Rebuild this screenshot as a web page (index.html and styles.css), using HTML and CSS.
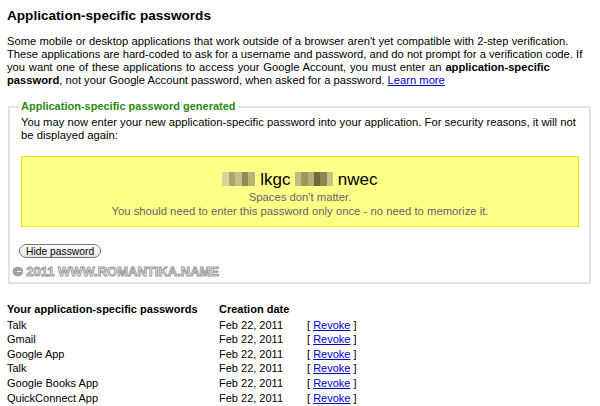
FILE: index.html
```html
<!DOCTYPE html>
<html>
<head>
<meta charset="utf-8">
<link rel="stylesheet" href="styles.css">
</head>
<body>
<div class="page">
  <h1 class="title">Application-specific passwords</h1>
  <p class="intro"><span class="ln l1">Some mobile or desktop applications that work outside of a browser aren't yet compatible with 2-step verification.</span> <span class="ln l2">These applications are hard-coded to ask for a username and password, and do not prompt for a verification code. If</span> <span class="ln l3">you want one of these applications to access your Google Account, you must enter an <b>application-specific</b></span> <span class="ln l4"><b>password</b>, not your Google Account password, when asked for a password. <a href="#" class="link">Learn more</a></span></p>

  <fieldset class="box">
    <legend class="legend">Application-specific password generated</legend>
    <p class="boxtext">You may now enter your new application-specific password into your application. For security reasons, it will not be displayed again:</p>
    <div class="pwbox">
      <div class="pw"><span class="blur b1"></span> lkgc <span class="blur b2"></span> nwec</div>
      <div class="note">Spaces don't matter.</div>
      <div class="note">You should need to enter this password only once - no need to memorize it.</div>
    </div>
    <button class="btn">Hide password</button>
    <div class="watermark">© 2011 WWW.ROMANTIKA.NAME</div>
  </fieldset>

  <table class="list">
    <thead>
      <tr><th class="c1">Your application-specific passwords</th><th class="c2">Creation date</th><th class="c3"></th></tr>
    </thead>
    <tbody>
      <tr><td>Talk</td><td>Feb 22, 2011</td><td>[ <a href="#" class="link">Revoke</a> ]</td></tr>
      <tr><td>Gmail</td><td>Feb 22, 2011</td><td>[ <a href="#" class="link">Revoke</a> ]</td></tr>
      <tr><td>Google App</td><td>Feb 22, 2011</td><td>[ <a href="#" class="link">Revoke</a> ]</td></tr>
      <tr><td>Talk</td><td>Feb 22, 2011</td><td>[ <a href="#" class="link">Revoke</a> ]</td></tr>
      <tr><td>Google Books App</td><td>Feb 22, 2011</td><td>[ <a href="#" class="link">Revoke</a> ]</td></tr>
      <tr><td>QuickConnect App</td><td>Feb 22, 2011</td><td>[ <a href="#" class="link">Revoke</a> ]</td></tr>
    </tbody>
  </table>
</div>
</body>
</html>
```
FILE: styles.css
```css
html, body {
  margin: 0;
  padding: 0;
  background: #fff;
}
body {
  font-family: "Liberation Sans", Arial, sans-serif;
  font-size: 11px;
  color: #000;
}
.page {
  padding: 0 10px 0 7px;
}
.title {
  font-size: 13.6px;
  font-weight: bold;
  margin: 0;
  padding-top: 7px;
  line-height: 17px;
}
.intro {
  margin: 11px 0 0 0;
  font-size: 11.2px;
  line-height: 13px;
  white-space: nowrap;
}
.ln {
  display: block;
}
.l1 { word-spacing: 0.2px; }
.l2 { word-spacing: 0; }
.l3 { word-spacing: 0.7px; }
.l4 { word-spacing: 0; }
.link {
  color: #00c;
  text-decoration: underline;
}
.box {
  margin: 13px 0 0 1px;
  padding: 0 10px 0 11px;
  border: 2px solid #e2e2e2;
  width: 558px;
}
.legend {
  color: #2a8a12;
  font-weight: bold;
  padding: 0 2px;
  margin-left: -2px;
  line-height: 13px;
}
.boxtext {
  margin: 3px 0 0 0;
  font-size: 11.25px;
  line-height: 13px;
}
.pwbox {
  margin-top: 14px;
  background: #ffff88;
  border: 1px solid #eeee00;
  height: 69px;
  text-align: center;
}
.pw {
  font-size: 17px;
  margin-top: 13px;
  line-height: 20px;
}
.blur {
  display: inline-block;
  height: 14px;
  vertical-align: -1px;
}
.b1 {
  width: 33px;
  background: linear-gradient(90deg, #d8d49a 0 20%, #a9a46a 20% 40%, #c4bf84 40% 60%, #8f8a55 60% 80%, #b9b47a 80%);
}
.b2 {
  width: 38px;
  background: linear-gradient(90deg, #c2bd80 0 16%, #9d9862 16% 33%, #b4af74 33% 50%, #6f6a40 50% 66%, #8d8854 66% 83%, #c7c286 83%);
}
.note {
  color: #666;
  font-size: 11.3px;
  line-height: 14px;
}
.btn {
  margin: 17px 0 0 -2px;
  display: block;
  font-family: "Liberation Sans", Arial, sans-serif;
  font-size: 10.3px;
  height: 14px;
  line-height: 11px;
  padding: 0 6px;
  border: 1px solid #777;
  border-radius: 7px;
  background: linear-gradient(#fff, #e6e6e6);
  color: #000;
}
.watermark {
  margin: 7px 0 3px -8px;
  font-weight: bold;
  font-size: 13px;
  line-height: 14px;
  color: #fff;
  -webkit-text-stroke: 1px #9a9a9a;
}
.list {
  border-collapse: collapse;
  margin-top: 18px;
}
.list th, .list td {
  padding: 0;
  text-align: left;
  line-height: 14.6px;
  vertical-align: top;
}
.list th {
  font-weight: bold;
  padding-bottom: 1px;
}
.c1 { width: 212px; }
.c2 { width: 88px; }
```
